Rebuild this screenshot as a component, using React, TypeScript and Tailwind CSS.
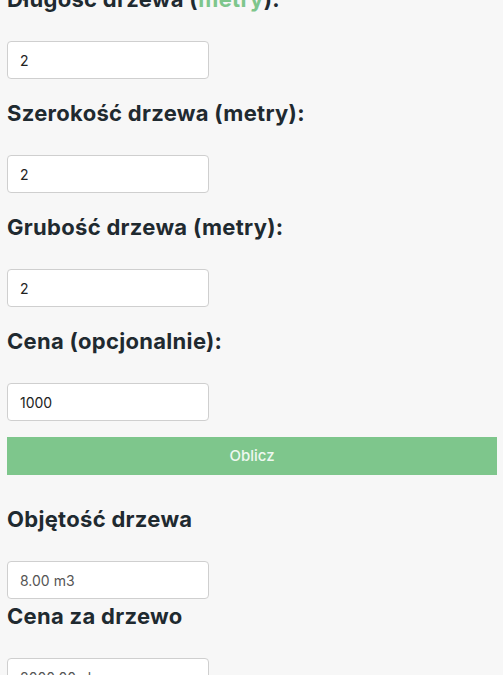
import React from "react";

const font = { fontFamily: 'Inter, "Noto Sans", sans-serif' };

function Field({
  label,
  value,
  first,
}: {
  label: React.ReactNode;
  value: string;
  first?: boolean;
}) {
  return (
    <div className={first ? "" : "mt-[20px]"}>
      <h3 className="mb-[28px] text-[22px] font-bold leading-[28px] tracking-[0.3px] text-[#1f2a30]">{label}</h3>
      <input
        type="text"
        defaultValue={value}
        className="block h-[38px] w-[202px] rounded-[4px] border border-[#cfcfcf] bg-white px-[12px] text-[14px] text-[#222]"
      />
    </div>
  );
}

function Result({ label, value, className }: { label: string; value: string; className: string }) {
  return (
    <div className={className}>
      <h3 className="mb-[28px] text-[22px] font-bold leading-[28px] tracking-[0.3px] text-[#1f2a30]">{label}</h3>
      <input
        type="text"
        readOnly
        value={value}
        className="block h-[38px] w-[202px] rounded-[4px] border border-[#cfcfcf] bg-white px-[12px] text-[14px] text-[#555]"
      />
    </div>
  );
}

export default function App() {
  return (
    <div className="h-[675px] overflow-hidden bg-[#f7f7f7]" style={font}>
      <div className="-mt-[15px] pl-[7px] pr-[6px]">
        <Field
          first
          label={
            <>
              Długość drzewa (<span className="text-[#7ec68c]">metry</span>):
            </>
          }
          value="2"
        />
        <Field label="Szerokość drzewa (metry):" value="2" />
        <Field label="Grubość drzewa (metry):" value="2" />
        <Field label="Cena (opcjonalnie):" value="1000" />
        <button
          type="button"
          className="mt-[16px] block h-[38px] w-full bg-[#7ec68c] text-[15px] font-medium text-[#eef8f0]"
        >
          Oblicz
        </button>
        <Result className="mt-[30px]" label="Objętość drzewa" value="8.00 m3" />
        <Result className="mt-[3px]" label="Cena za drzewo" value="8000.00 zł" />
      </div>
    </div>
  );
}
